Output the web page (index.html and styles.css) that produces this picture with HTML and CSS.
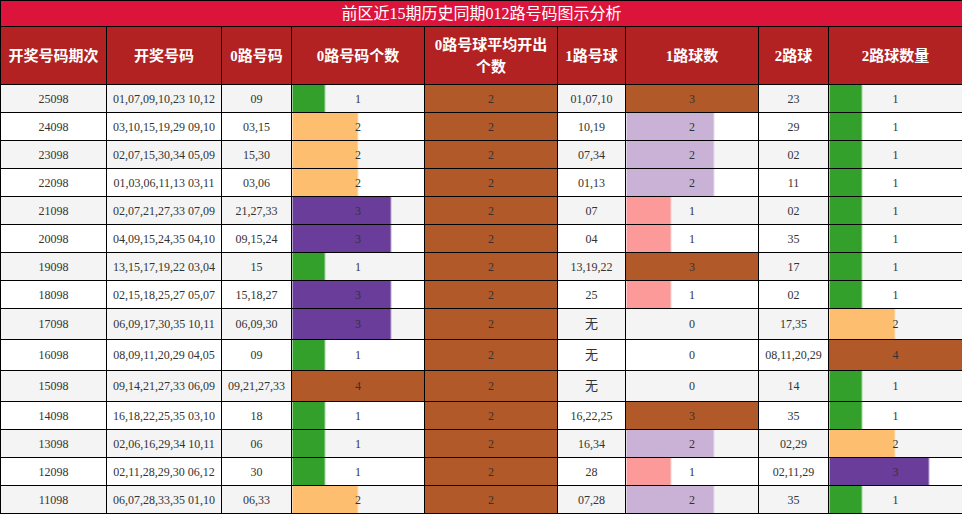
FILE: index.html
```html
<!DOCTYPE html>
<html lang="zh">
<head>
<meta charset="utf-8">
<title>前区近15期历史同期012路号码图示分析</title>
<link rel="stylesheet" href="styles.css">
</head>
<body>
<table class="grid">
  <colgroup>
    <col class="c1"><col class="c2"><col class="c3"><col class="c4"><col class="c5"><col class="c6"><col class="c7"><col class="c8"><col class="c9">
  </colgroup>
  <thead>
    <tr class="title-row"><th colspan="9" class="title">前区近15期历史同期012路号码图示分析</th></tr>
    <tr class="head-row">
      <th>开奖号码期次</th><th>开奖号码</th><th>0路号码</th><th>0路号码个数</th><th>0路号球平均开出个数</th><th>1路号球</th><th>1路球数</th><th>2路球</th><th>2路球数量</th>
    </tr>
  </thead>
  <tbody>
    <tr><td>25098</td><td>01,07,09,10,23 10,12</td><td>09</td><td class="bar g" style="--w:25%">1</td><td class="avg">2</td><td>01,07,10</td><td class="bar b" style="--w:100%">3</td><td>23</td><td class="bar g" style="--w:25%">1</td></tr>
    <tr><td>24098</td><td>03,10,15,19,29 09,10</td><td>03,15</td><td class="bar o" style="--w:50%">2</td><td class="avg">2</td><td>10,19</td><td class="bar l" style="--w:67%">2</td><td>29</td><td class="bar g" style="--w:25%">1</td></tr>
    <tr><td>23098</td><td>02,07,15,30,34 05,09</td><td>15,30</td><td class="bar o" style="--w:50%">2</td><td class="avg">2</td><td>07,34</td><td class="bar l" style="--w:67%">2</td><td>02</td><td class="bar g" style="--w:25%">1</td></tr>
    <tr><td>22098</td><td>01,03,06,11,13 03,11</td><td>03,06</td><td class="bar o" style="--w:50%">2</td><td class="avg">2</td><td>01,13</td><td class="bar l" style="--w:67%">2</td><td>11</td><td class="bar g" style="--w:25%">1</td></tr>
    <tr><td>21098</td><td>02,07,21,27,33 07,09</td><td>21,27,33</td><td class="bar p" style="--w:75%">3</td><td class="avg">2</td><td>07</td><td class="bar k" style="--w:34%">1</td><td>02</td><td class="bar g" style="--w:25%">1</td></tr>
    <tr><td>20098</td><td>04,09,15,24,35 04,10</td><td>09,15,24</td><td class="bar p" style="--w:75%">3</td><td class="avg">2</td><td>04</td><td class="bar k" style="--w:34%">1</td><td>35</td><td class="bar g" style="--w:25%">1</td></tr>
    <tr><td>19098</td><td>13,15,17,19,22 03,04</td><td>15</td><td class="bar g" style="--w:25%">1</td><td class="avg">2</td><td>13,19,22</td><td class="bar b" style="--w:100%">3</td><td>17</td><td class="bar g" style="--w:25%">1</td></tr>
    <tr><td>18098</td><td>02,15,18,25,27 05,07</td><td>15,18,27</td><td class="bar p" style="--w:75%">3</td><td class="avg">2</td><td>25</td><td class="bar k" style="--w:34%">1</td><td>02</td><td class="bar g" style="--w:25%">1</td></tr>
    <tr class="tall"><td>17098</td><td>06,09,17,30,35 10,11</td><td>06,09,30</td><td class="bar p" style="--w:75%">3</td><td class="avg">2</td><td class="cjk">无</td><td>0</td><td>17,35</td><td class="bar o" style="--w:50%">2</td></tr>
    <tr class="tall"><td>16098</td><td>08,09,11,20,29 04,05</td><td>09</td><td class="bar g" style="--w:25%">1</td><td class="avg">2</td><td class="cjk">无</td><td>0</td><td>08,11,20,29</td><td class="bar b" style="--w:100%">4</td></tr>
    <tr class="tall"><td>15098</td><td>09,14,21,27,33 06,09</td><td>09,21,27,33</td><td class="bar b" style="--w:100%">4</td><td class="avg">2</td><td class="cjk">无</td><td>0</td><td>14</td><td class="bar g" style="--w:25%">1</td></tr>
    <tr><td>14098</td><td>16,18,22,25,35 03,10</td><td>18</td><td class="bar g" style="--w:25%">1</td><td class="avg">2</td><td>16,22,25</td><td class="bar b" style="--w:100%">3</td><td>35</td><td class="bar g" style="--w:25%">1</td></tr>
    <tr><td>13098</td><td>02,06,16,29,34 10,11</td><td>06</td><td class="bar g" style="--w:25%">1</td><td class="avg">2</td><td>16,34</td><td class="bar l" style="--w:67%">2</td><td>02,29</td><td class="bar o" style="--w:50%">2</td></tr>
    <tr><td>12098</td><td>02,11,28,29,30 06,12</td><td>30</td><td class="bar g" style="--w:25%">1</td><td class="avg">2</td><td>28</td><td class="bar k" style="--w:34%">1</td><td>02,11,29</td><td class="bar p" style="--w:75%">3</td></tr>
    <tr><td>11098</td><td>06,07,28,33,35 01,10</td><td>06,33</td><td class="bar o" style="--w:50%">2</td><td class="avg">2</td><td>07,28</td><td class="bar l" style="--w:67%">2</td><td>35</td><td class="bar g" style="--w:25%">1</td></tr>
  </tbody>
</table>
</body>
</html>
```

FILE: styles.css
```css
html, body {
  margin: 0;
  padding: 0;
  background: #ffffff;
}

.grid {
  width: 962px;
  border-collapse: collapse;
  table-layout: fixed;
  font-family: "Liberation Serif", "Noto Sans CJK SC", serif;
  font-size: 12px;
  color: #333333;
}

.c1 { width: 106px; }
.c2 { width: 115px; }
.c3 { width: 70px; }
.c4 { width: 133px; }
.c5 { width: 133px; }
.c6 { width: 68px; }
.c7 { width: 133px; }
.c8 { width: 70px; }
.c9 { width: 134px; }

.grid th,
.grid td {
  border: 1px solid #000000;
  padding: 0;
  text-align: center;
  vertical-align: middle;
}

.title-row th {
  height: 25px;
}

.title {
  background: #dc143c;
  color: #ffffff;
  font-weight: normal;
  font-size: 16px;
  line-height: 20px;
}

.head-row th {
  height: 57px;
  background: #b22222;
  color: #ffffff;
  font-weight: bold;
  font-size: 15px;
  line-height: 22px;
  padding: 0 3px;
}

.grid td {
  height: 27px;
  line-height: 14px;
  white-space: nowrap;
}

.grid tbody tr:nth-child(odd) {
  background-color: #f4f4f4;
}

.grid tbody tr:nth-child(even) {
  background-color: #ffffff;
}

.grid tbody tr.tall td {
  height: 30px;
}

.cjk {
  font-size: 13px;
}

.grid td.avg {
  background-color: #b15928;
}

.grid td.bar {
  background-image: linear-gradient(to right,
    var(--c) calc(var(--w) - 1px),
    var(--e) calc(var(--w) - 1px),
    var(--e) var(--w),
    transparent var(--w));
}

.g { --c: #33a02c; --e: #a3d49f; }
.o { --c: #fdbf6f; --e: #fde2bd; }
.p { --c: #6a3d9a; --e: #bba6d0; }
.b { --c: #b15928; --e: #b15928; }
.l { --c: #cab2d6; --e: #e6dbeb; }
.k { --c: #fb9a99; --e: #fcd0d0; }
```
